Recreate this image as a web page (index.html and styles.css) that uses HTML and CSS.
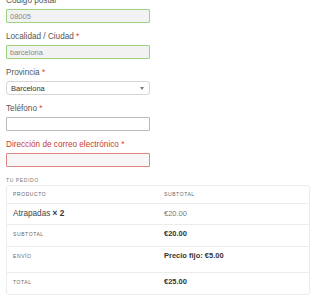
FILE: index.html
```html
<!DOCTYPE html>
<html lang="es">
<head>
    <meta charset="UTF-8">
    <meta name="viewport" content="width=device-width, initial-scale=1.0">
    <title>Finalizar compra</title>
    <link rel="stylesheet" href="styles.css">
</head>
<body>
    <form class="billing">
        <p class="field">
            <label>Código postal <abbr>*</abbr></label>
            <input type="text" class="input valid" value="08005">
        </p>
        <p class="field">
            <label>Localidad / Ciudad <abbr>*</abbr></label>
            <input type="text" class="input valid" value="barcelona">
        </p>
        <p class="field">
            <label>Provincia <abbr>*</abbr></label>
            <span class="select">Barcelona<span class="arrow"></span></span>
        </p>
        <p class="field">
            <label>Teléfono <abbr>*</abbr></label>
            <input type="text" class="input plain" value="">
        </p>
        <p class="field invalid">
            <label>Dirección de correo electrónico <abbr>*</abbr></label>
            <input type="text" class="input error" value="">
        </p>
    </form>

    <h3 class="order-title">Tu pedido</h3>
    <table class="order">
        <tr class="head">
            <th>Producto</th>
            <th>Subtotal</th>
        </tr>
        <tr class="item">
            <td>Atrapadas <strong>&times;&nbsp;2</strong></td>
            <td class="muted">€20.00</td>
        </tr>
        <tr>
            <th>Subtotal</th>
            <td><strong>€20.00</strong></td>
        </tr>
        <tr class="shipping">
            <th>Envío</th>
            <td><strong>Precio fijo: €5.00</strong></td>
        </tr>
        <tr>
            <th>Total</th>
            <td><strong>€25.00</strong></td>
        </tr>
    </table>
</body>
</html>
```

FILE: styles.css
```css
/* Checkout styles */
body {
    font-family: "Liberation Sans", Arial, sans-serif;
    background-color: #fff;
    color: #555;
    margin: 0;
    padding: 0 6px;
    font-size: 8px;
}
.billing {
    margin-top: -5px;
    width: 144px;
}
.field {
    margin: 0 0 8px;
}
.field label {
    display: block;
    line-height: 11px;
    margin-bottom: 3px;
    font-size: 8.2px;
    color: #555;
}
.field abbr {
    color: #e2401c;
    text-decoration: none;
}
.field.invalid label {
    color: #c43b3b;
}
.input {
    display: block;
    box-sizing: border-box;
    width: 144px;
    height: 14px;
    margin: 0;
    padding: 0 3px;
    font-family: inherit;
    font-size: 7.5px;
    color: #8a8a8a;
    background-color: #f2f2f2;
    border: 1px solid #bbb;
    border-radius: 1px;
    outline: none;
}
.input.valid {
    border-color: #9fd47f; /* Green border */
}
.input.plain {
    background-color: #fff;
    border-color: #b9b9b9;
}
.input.error {
    background-color: #f6f6f6;
    border-color: #e08585; /* Red border */
}
.select {
    display: flex;
    align-items: center;
    justify-content: space-between;
    box-sizing: border-box;
    width: 144px;
    height: 14px;
    padding: 0 4px 0 4px;
    font-size: 7.5px;
    color: #333;
    background-color: #fff;
    border: 1px solid #d6d6d6;
    border-radius: 3px;
}
.select .arrow {
    width: 0;
    height: 0;
    border-left: 2px solid transparent;
    border-right: 2px solid transparent;
    border-top: 3px solid #777;
    margin-right: 1px;
}
.order-title {
    margin: 9px 0 1px;
    font-size: 5px;
    font-weight: normal;
    letter-spacing: 0.6px;
    text-transform: uppercase;
    color: #777;
    line-height: 8px;
}
.order {
    width: 304px;
    border-collapse: separate;
    border-spacing: 0;
    border: 1px solid #ececec;
    border-radius: 3px;
}
.order th,
.order td {
    text-align: left;
    vertical-align: top;
    border-top: 1px solid #ececec;
    padding: 0 6px;
}
.order tr:first-child th {
    border-top: none;
}
.order th {
    font-size: 5px;
    font-weight: normal;
    letter-spacing: 0.6px;
    text-transform: uppercase;
    color: #666;
    width: 133px;
    height: 21px;
    line-height: 18px;
}
.order td {
    font-size: 7.5px;
    color: #333;
    line-height: 17px;
    height: 21px;
}
.order .head th {
    height: 17px;
    line-height: 17px;
}
.order .item td {
    font-size: 8.2px;
    line-height: 20px;
    height: 20px;
    color: #444;
}
.order .item td.muted {
    color: #777;
    font-size: 7.5px;
}
.order .shipping th,
.order .shipping td {
    height: 25px;
}
.order strong {
    color: #333;
}
```
